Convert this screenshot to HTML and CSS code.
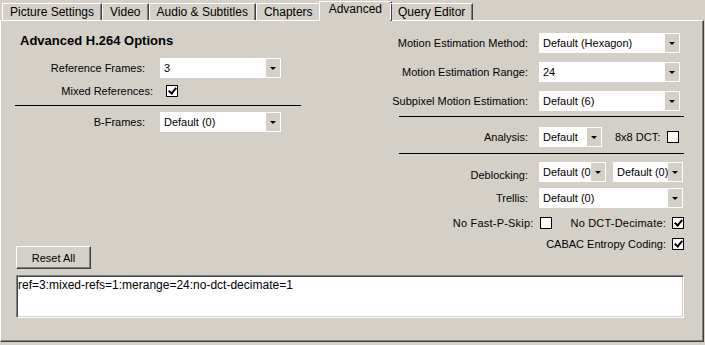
FILE: index.html
```html
<!DOCTYPE html>
<html lang="en">
<head>
    <meta charset="UTF-8">
    <title>Advanced</title>
    <link rel="stylesheet" href="styles.css">
</head>
<body>
    <div class="tabs">
        <div class="tab">Picture Settings</div>
        <div class="tab">Video</div>
        <div class="tab">Audio &amp; Subtitles</div>
        <div class="tab">Chapters</div>
        <div class="tab active">Advanced</div>
        <div class="tab">Query Editor</div>
    </div>
    <div class="panel">
        <div class="columns">
            <div class="col-left">
                <div class="heading">Advanced H.264 Options</div>
                <div class="row first">
                    <span class="label">Reference Frames:</span>
                    <div class="select w-left"><span class="value">3</span><span class="arrow"></span></div>
                </div>
                <div class="row check-row mixed">
                    <span class="label">Mixed References:</span>
                    <span class="check on"></span>
                </div>
                <div class="rule left-rule"></div>
                <div class="row">
                    <span class="label">B-Frames:</span>
                    <div class="select w-left"><span class="value">Default (0)</span><span class="arrow"></span></div>
                </div>
                <button class="btn">Reset All</button>
            </div>
            <div class="col-right">
                <div class="row">
                    <span class="label">Motion Estimation Method:</span>
                    <div class="select w-me"><span class="value">Default (Hexagon)</span><span class="arrow"></span></div>
                </div>
                <div class="row">
                    <span class="label">Motion Estimation Range:</span>
                    <div class="select w-me"><span class="value">24</span><span class="arrow"></span></div>
                </div>
                <div class="row">
                    <span class="label">Subpixel Motion Estimation:</span>
                    <div class="select w-me"><span class="value">Default (6)</span><span class="arrow"></span></div>
                </div>
                <div class="rule r1"></div>
                <div class="row">
                    <span class="label">Analysis:</span>
                    <div class="select w-analysis"><span class="value">Default</span><span class="arrow"></span></div>
                    <span class="inline-label">8x8 DCT:</span>
                    <span class="check"></span>
                </div>
                <div class="rule r2"></div>
                <div class="row deblock">
                    <span class="label">Deblocking:</span>
                    <div class="select w-deb1"><span class="value">Default (0)</span><span class="arrow"></span></div>
                    <div class="select w-deb2"><span class="value">Default (0)</span><span class="arrow"></span></div>
                </div>
                <div class="row trellis">
                    <span class="label">Trellis:</span>
                    <div class="select w-trellis"><span class="value">Default (0)</span><span class="arrow"></span></div>
                </div>
                <div class="row check-row end skip">
                    <span>No Fast-P-Skip:</span>
                    <span class="check"></span>
                    <span class="inline-label">No DCT-Decimate:</span>
                    <span class="check on"></span>
                </div>
                <div class="row check-row end cabac">
                    <span>CABAC Entropy Coding:</span>
                    <span class="check on"></span>
                </div>
            </div>
        </div>
        <textarea class="query">ref=3:mixed-refs=1:merange=24:no-dct-decimate=1</textarea>
    </div>
</body>
</html>
```

FILE: styles.css
```css
body {
    margin: 0;
    background: #d4d0c8;
    font-family: "Liberation Sans", Arial, sans-serif;
    font-size: 11px;
    color: #000;
}
.tabs {
    display: flex;
    align-items: flex-end;
    height: 20px;
    padding-left: 2px;
    position: relative;
    z-index: 1;
    font-size: 12px;
}
.tab {
    height: 16px;
    line-height: 16px;
    padding: 0 7px;
    border-top: 1px solid #fff;
    border-left: 1px solid #fff;
    border-right: 1px solid #404040;
    box-shadow: inset -1px 0 #808080;
    white-space: nowrap;
}
.tab.active {
    height: 19px;
    line-height: 15px;
    margin: 0 -2px -1px;
    padding: 0 9px;
    background: #d4d0c8;
}
.panel {
    box-sizing: border-box;
    width: 704px;
    height: 322px;
    padding: 12px 0 0 14px;
    border-top: 1px solid #fff;
    border-left: 1px solid #fff;
    border-right: 1px solid #404040;
    border-bottom: 1px solid #404040;
    box-shadow: inset -1px -1px #808080;
}
.columns {
    display: flex;
    height: 236px;
}
.col-left {
    width: 286px;
    display: flex;
    flex-direction: column;
}
.col-right {
    width: 294px;
    margin-left: 89px;
}
.heading {
    font-weight: bold;
    font-size: 13px;
    line-height: 14px;
    height: 14px;
    margin-left: 5px;
    padding-top: 1px;
}
.row {
    display: flex;
    align-items: center;
    height: 20px;
    margin-bottom: 9px;
}
.row.first {
    margin-top: 10px;
    margin-bottom: 5px;
}
.col-left .label {
    width: 130px;
    margin-right: 15px;
    text-align: right;
}
.col-left .mixed {
    height: 16px;
    margin-bottom: 0;
}
.col-left .mixed .label {
    width: 138px;
    margin-right: 7px;
}
.col-right .label {
    width: 138px;
    margin-right: 11px;
    text-align: right;
    white-space: nowrap;
}
.rule {
    height: 1px;
    background: #000;
}
.left-rule {
    margin: 6px 0 6px;
}
.col-right .rule {
    margin-left: 9px;
}
.col-right .row:nth-child(3) {
    margin-bottom: 0;
}
.rule.r1 {
    margin-top: 5px;
    margin-bottom: 10px;
}
.col-right .row:nth-child(5) {
    margin-bottom: 0;
}
.rule.r2 {
    margin-top: 6px;
    margin-bottom: 8px;
}
.deblock {
    margin-bottom: 6px;
}
.deblock .label {
    padding-top: 5px;
}
.trellis {
    margin-bottom: 7px;
}
.check-row {
    height: 16px;
}
.check-row.end {
    justify-content: flex-end;
}
.skip {
    margin-bottom: 5px;
}
.select {
    box-sizing: border-box;
    display: flex;
    height: 20px;
    padding: 1px;
    background: #fff;
}
.select .value {
    flex: 1;
    overflow: hidden;
    white-space: nowrap;
    line-height: 18px;
    padding-left: 3px;
}
.select .arrow {
    width: 14px;
    background: #d4d0c8;
    display: flex;
    align-items: center;
    justify-content: center;
}
.select .arrow::after {
    content: "";
    border-left: 3px solid transparent;
    border-right: 3px solid transparent;
    border-top: 3px solid #000;
}
.w-left { width: 121px; }
.w-me { width: 141px; }
.w-analysis { width: 63px; }
.w-deb1 { width: 67px; }
.w-deb2 { width: 70px; margin-left: 7px; }
.w-trellis { width: 144px; }
.inline-label {
    margin-left: 13px;
    margin-right: 7px;
}
.check-row .check {
    margin-left: 6px;
}
.check-row .check + .inline-label {
    margin-left: 19px;
    margin-right: 0;
}
.skip span:first-child,
.skip .inline-label {
    letter-spacing: 0.2px;
}
.check {
    box-sizing: border-box;
    width: 12px;
    height: 12px;
    border: 1px solid #000;
    background: #fff;
    position: relative;
}
.check.on::after {
    content: "";
    position: absolute;
    left: 3px;
    top: 0px;
    width: 3px;
    height: 6px;
    border-right: 2px solid #000;
    border-bottom: 2px solid #000;
    transform: rotate(40deg);
}
.btn {
    margin-top: auto;
    margin-left: 1px;
    width: 75px;
    height: 23px;
    padding: 0;
    font-family: inherit;
    font-size: 11px;
    color: #000;
    background: #d4d0c8;
    border-top: 1px solid #fff;
    border-left: 1px solid #fff;
    border-right: 1px solid #404040;
    border-bottom: 1px solid #404040;
    box-shadow: inset -1px -1px #808080;
}
.query {
    display: block;
    box-sizing: border-box;
    margin: 6px 0 0 1px;
    width: 668px;
    height: 43px;
    padding: 2px 1px;
    resize: none;
    font-family: inherit;
    font-size: 12px;
    background: #fff;
    border-top: 1px solid #808080;
    border-left: 1px solid #808080;
    border-right: 1px solid #fff;
    border-bottom: 1px solid #fff;
    box-shadow: inset 1px 1px #404040, inset -1px -1px #d4d0c8;
}
```
